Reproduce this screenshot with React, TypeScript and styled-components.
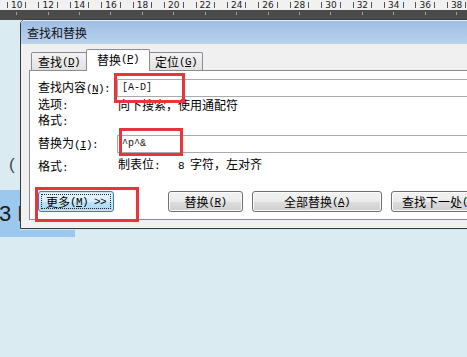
import React from 'react';
import styled, { createGlobalStyle } from 'styled-components';

const GlobalStyle = createGlobalStyle`
  html, body { margin: 0; padding: 0; }
  body {
    background: #daecf2;
    font-family: "Noto Sans CJK SC", "Liberation Sans", sans-serif;
    font-size: 12px;
    color: #000;
    overflow: hidden;
  }
`;

const rulerNumbers = [10, 12, 14, 16, 18, 20, 22, 24, 26, 28, 30, 32, 34, 36, 38];

export default function App() {
    return (
        <Screen>
            <GlobalStyle />
            <Ruler>
                <RulerScale>
                    {rulerNumbers.map(n => <RulerMark key={n}>{n}</RulerMark>)}
                </RulerScale>
                <RulerBand>
                    {rulerNumbers.map(n => <BandTick key={n} />)}
                </RulerBand>
            </Ruler>

            <Document>
                <DocLine>(</DocLine>
                <Selection>3 D</Selection>
            </Document>

            <Dialog>
                <TitleBar>查找和替换</TitleBar>
                <DialogBody>
                    <TabRow>
                        <Tab $w={56}>查找<Key>(<u>D</u>)</Key></Tab>
                        <Tab $w={64} $active>替换<Key>(<u>P</u>)</Key></Tab>
                        <Tab $w={54}>定位<Key>(<u>G</u>)</Key></Tab>
                    </TabRow>
                    <Panel>
                        <FieldRow $h={18}>
                            <Label>查找内容<Key>(<u>N</u>):</Key></Label>
                            <InputBox>[A-D]</InputBox>
                        </FieldRow>
                        <FieldRow $h={16}>
                            <Label>选项<Key>:</Key></Label>
                            <Value>向下搜索，使用通配符</Value>
                        </FieldRow>
                        <FieldRow $h={16}>
                            <Label>格式<Key>:</Key></Label>
                        </FieldRow>
                        <FieldRow $h={18} $mt={6}>
                            <Label>替换为<Key>(<u>I</u>):</Key></Label>
                            <InputBox>^p^&amp;</InputBox>
                        </FieldRow>
                        <FieldRow $h={16} $mt={6}>
                            <Label>格式<Key>:</Key></Label>
                            <Value $raise>制表位<Key>:&nbsp;&nbsp;&nbsp;8&nbsp;</Key>字符，左对齐</Value>
                        </FieldRow>
                        <ButtonRow>
                            <Button $w={76} $focused>更多<Key>(<u>M</u>) &gt;&gt;</Key></Button>
                            <ButtonGroup>
                                <Button $w={75}>替换<Key>(<u>R</u>)</Key></Button>
                                <Button $w={130}>全部替换<Key>(<u>A</u>)</Key></Button>
                                <Button $w={100}>查找下一处<Key>(<u>F</u>)</Key></Button>
                            </ButtonGroup>
                        </ButtonRow>
                    </Panel>
                </DialogBody>
            </Dialog>

            <Mark $x={114} $y={73} $w={71} $h={30} />
            <Mark $x={119} $y={128} $w={64} $h={28} />
            <Mark $x={35} $y={187} $w={104} $h={35} />
        </Screen>
    );
}

const Screen = styled.div`
    position: relative;
    width: 467px;
    height: 357px;
    overflow: hidden;
    background: #daecf2;
`;

const Ruler = styled.div`
    height: 20px;
    display: flex;
    flex-direction: column;
`;

const RulerScale = styled.div`
    height: 10px;
    background: #f1f1f1;
    display: flex;
    padding-left: 1px;
`;

const RulerMark = styled.div`
    width: 31.43px;
    flex: none;
    display: flex;
    align-items: center;
    justify-content: center;
    gap: 3px;
    font-family: "DejaVu Sans", sans-serif;
    font-size: 9px;
    line-height: 10px;
    color: #222;
    &::before, &::after {
        content: '';
        width: 1px;
        height: 6px;
        background: #555;
    }
`;

const RulerBand = styled.div`
    height: 10px;
    background: #4b4b4b;
    display: flex;
    padding-left: 1px;
`;

const BandTick = styled.div`
    width: 31.43px;
    flex: none;
    display: flex;
    justify-content: center;
    &::after {
        content: '';
        width: 1px;
        height: 3px;
        margin-top: 2px;
        background: #a0a0a0;
    }
`;

const Document = styled.div`
    display: flex;
    flex-direction: column;
    padding-top: 135px;
`;

const DocLine = styled.div`
    height: 20px;
    line-height: 20px;
    padding-left: 9px;
    font-family: "Liberation Sans", sans-serif;
    font-size: 17px;
    color: #444;
`;

const Selection = styled.div`
    margin-top: 15px;
    width: 75px;
    height: 47px;
    line-height: 47px;
    background: #9dc8ee;
    font-family: "Liberation Sans", sans-serif;
    font-size: 22px;
    color: #1a1a1a;
    text-indent: -1px;
`;

const Dialog = styled.div`
    position: absolute;
    left: 20px;
    top: 19px;
    width: 470px;
    height: 210px;
    box-sizing: border-box;
    border: 1px solid #3a3a3a;
    border-radius: 5px 5px 0 0;
    background: #f0f0f0;
    display: flex;
    flex-direction: column;
    box-shadow: 0 1px 0 #c4e8f4;
`;

const TitleBar = styled.div`
    height: 23px;
    border-top: 1px solid #e6eef8;
    border-radius: 4px 4px 0 0;
    background: linear-gradient(#9fbee4, #b9d2ee);
    padding-left: 6px;
    line-height: 23px;
    font-size: 12px;
    color: #111;
`;

const DialogBody = styled.div`
    flex: 1;
    padding: 5px 0 0 8px;
    display: flex;
    flex-direction: column;
`;

const TabRow = styled.div`
    height: 22px;
    display: flex;
    align-items: flex-end;
    padding-left: 2px;
    margin-bottom: -1px;
    position: relative;
    z-index: 1;
`;

const Tab = styled.div<{ $w: number; $active?: boolean }>`
    width: ${p => p.$w}px;
    height: ${p => (p.$active ? 22 : 18)}px;
    margin-bottom: ${p => (p.$active ? 0 : 1)}px;
    margin-left: -1px;
    box-sizing: border-box;
    border: 1px solid #898c95;
    border-bottom: none;
    border-radius: 2px 2px 0 0;
    background: ${p => (p.$active ? '#fff' : 'linear-gradient(#f3f3f3, #e2e2e2)')};
    display: flex;
    align-items: center;
    justify-content: center;
    padding-bottom: ${p => (p.$active ? 3 : 0)}px;
    font-size: 12px;
    white-space: nowrap;
    &:first-child { margin-left: 0; }
`;

// ascii part of a caption, kept at the 6px cell width of the dialog font
const Key = styled.span`
    font-family: "Liberation Mono", monospace;
    font-size: 11px;
    letter-spacing: -0.6px;
    white-space: pre;
`;

const Panel = styled.div`
    height: 150px;
    box-sizing: border-box;
    border: 1px solid #898c95;
    border-right: none;
    background: #fff;
    padding: 8px 0 0 8px;
    display: flex;
    flex-direction: column;
`;

const FieldRow = styled.div<{ $h: number; $mt?: number }>`
    height: ${p => p.$h}px;
    margin-top: ${p => p.$mt ?? 0}px;
    display: grid;
    grid-template-columns: 79px 1fr;
    align-items: center;
`;

const Label = styled.span`
    font-size: 12px;
    line-height: 14px;
    white-space: nowrap;
`;

const Value = styled.span<{ $raise?: boolean }>`
    padding-left: 1px;
    font-size: 12px;
    line-height: 14px;
    white-space: nowrap;
    margin-top: ${p => (p.$raise ? -5 : 0)}px;
`;

const InputBox = styled.div`
    height: 18px;
    box-sizing: border-box;
    border: 1px solid #a7abb0;
    border-right: none;
    background: #fff;
    padding-left: 4px;
    font-family: "Liberation Mono", monospace;
    font-size: 10px;
    line-height: 16px;
    color: #111;
`;

const ButtonRow = styled.div`
    margin-top: 16px;
    display: flex;
    align-items: center;
`;

const ButtonGroup = styled.div`
    margin-left: 54px;
    display: flex;
    gap: 9px;
`;

const Button = styled.div<{ $w: number; $focused?: boolean }>`
    position: relative;
    width: ${p => p.$w}px;
    height: 21px;
    flex: none;
    box-sizing: border-box;
    border: 1px solid ${p => (p.$focused ? '#3c7fb1' : '#707070')};
    border-radius: 3px;
    background: ${p => (p.$focused
        ? 'linear-gradient(#e9f5fc 0%, #d8eefb 50%, #bde3f8 51%, #a8d8f3 100%)'
        : 'linear-gradient(#f2f2f2 0%, #ebebeb 50%, #dddddd 51%, #cfcfcf 100%)')};
    box-shadow: inset 0 0 0 1px ${p => (p.$focused ? '#c7e6f6' : '#fbfbfb')};
    display: flex;
    align-items: center;
    justify-content: center;
    font-size: 12px;
    white-space: nowrap;
    &::after {
        content: '';
        display: ${p => (p.$focused ? 'block' : 'none')};
        position: absolute;
        inset: 2px;
        border: 1px dotted #222;
    }
`;

const Mark = styled.div<{ $x: number; $y: number; $w: number; $h: number }>`
    position: absolute;
    left: ${p => p.$x}px;
    top: ${p => p.$y}px;
    width: ${p => p.$w}px;
    height: ${p => p.$h}px;
    box-sizing: border-box;
    border: 3px solid #e8343c;
    pointer-events: none;
`;
